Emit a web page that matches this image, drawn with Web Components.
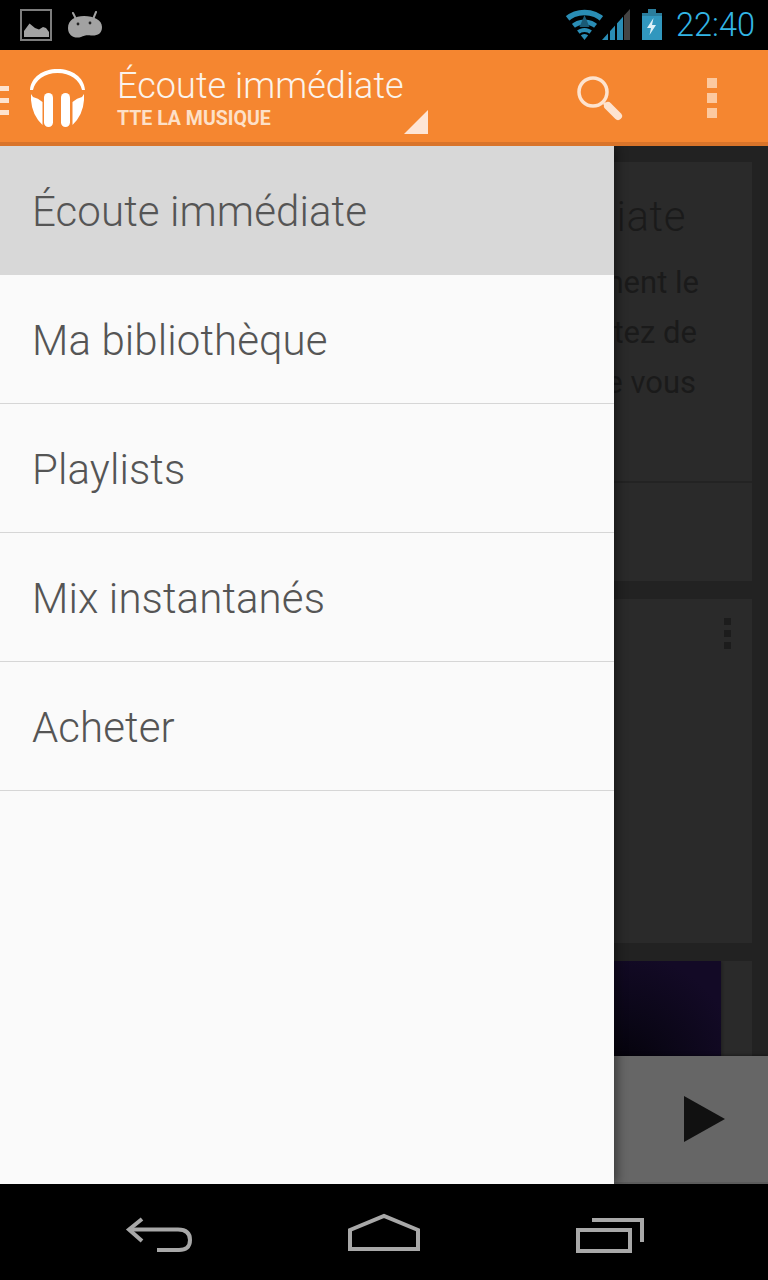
<!DOCTYPE html>
<html lang="fr">
<head>
<meta charset="utf-8">
<title>Écoute immédiate</title>
<style>
  html, body { margin: 0; background: #000; }
  body { font-family: Roboto, "Liberation Sans", sans-serif; }
</style>
</head>
<body>
<app-shell>
  <status-bar slot="status"></status-bar>
  <action-bar slot="action" title="Écoute immédiate" subtitle="TTE LA MUSIQUE"></action-bar>
  <feed-view slot="main"></feed-view>
  <now-playing slot="main"></now-playing>
  <nav-drawer slot="main">
    <drawer-item selected>Écoute immédiate</drawer-item>
    <drawer-item>Ma bibliothèque</drawer-item>
    <drawer-item>Playlists</drawer-item>
    <drawer-item>Mix instantanés</drawer-item>
    <drawer-item>Acheter</drawer-item>
  </nav-drawer>
  <system-nav slot="nav"></system-nav>
</app-shell>

<script>
// small helper so every element below is just markup + styles
function component(name, html, extra) {
    const template = document.createElement('template')
    template.innerHTML = html
    class El extends HTMLElement {
        constructor() {
            super()
            this.attachShadow({ mode: 'open' })
            this.shadowRoot.appendChild(template.content.cloneNode(true))
        }
        connectedCallback() {
            if (extra) extra(this, this.shadowRoot)
        }
    }
    customElements.define(name, El)
}

component('app-shell', `
    <style>
        :host { display: flex; flex-direction: column; width: 768px; height: 1280px; overflow: hidden; }
        #main { position: relative; flex: 1; min-height: 0; overflow: hidden; background: #222; }
    </style>
    <slot name="status"></slot>
    <slot name="action"></slot>
    <div id="main"><slot name="main"></slot></div>
    <slot name="nav"></slot>
`)

component('status-bar', `
    <style>
        :host { display: flex; align-items: center; height: 50px; background: #000; padding: 0 13px 0 20px; box-sizing: border-box; }
        svg { display: block; flex: none; }
        #left { display: flex; gap: 14px; align-items: center; }
        #right { display: flex; align-items: center; margin-left: auto; }
        #time { font: 300 32.500px/50px Roboto, sans-serif; color: #33b5e5; margin-left: 13px; }
    </style>
    <div id="left">
        <svg width="33" height="34" viewBox="0 0 33 34">
            <rect x="1" y="2" width="30" height="30" fill="none" stroke="#7d7d7d" stroke-width="2"/>
            <path d="M4 29V23L9.500 15.500L15 20L19 21.500L23 19L26 20L29 24V29Z" fill="#a2a2a2"/>
        </svg>
        <svg width="35" height="28" viewBox="0 0 35 28">
            <path d="M6 2L8.500 7M29 1L26.500 7" stroke="#a2a2a2" stroke-width="2" stroke-linecap="round"/>
            <path d="M1 17C1 9 8 5 17 5C27 5 35 9 35 16C35 23 30 25 24 24.500C20 24 17 24.500 14 26C8 28 1 25 1 17Z" fill="#a2a2a2"/>
            <circle cx="11" cy="13" r="1.400" fill="#222"/>
            <circle cx="23" cy="12" r="1.400" fill="#222"/>
        </svg>
    </div>
    <div id="right">
        <svg width="98" height="40" viewBox="0 0 98 40">
            <defs>
                <clipPath id="sig"><path d="M37 35L65 4V35Z"/></clipPath>
                <clipPath id="fan"><path d="M19.500 35L-5.800 2.500H44.800Z"/></clipPath>
            </defs>
            <g clip-path="url(#fan)" fill="none" stroke="#2a8db5">
                <circle cx="19.500" cy="35" r="27.500" stroke-width="5.500"/>
                <circle cx="19.500" cy="35" r="18" stroke-width="5"/>
                <circle cx="19.500" cy="35" r="10" stroke-width="4"/>
                <circle cx="19.500" cy="35" r="3" stroke-width="6"/>
            </g>
            <path d="M19.500 10L14.500 22H24.500Z" fill="#1a5a75"/>
            <g clip-path="url(#sig)">
                <rect x="37" y="4" width="6" height="31" fill="#2a8db5"/>
                <rect x="45" y="4" width="5" height="31" fill="#2a8db5"/>
                <rect x="52" y="4" width="6" height="31" fill="#2a8db5"/>
                <rect x="59" y="4" width="6" height="31" fill="#444"/>
            </g>
            <path d="M83 4H91V8H97V35H77V8H83Z" fill="#3197be"/>
            <path d="M83 4H91V8H97V11H77V8H83Z" fill="#2a7d9c"/>
            <path d="M88.500 13L82 23H86L84.500 30L91 20H87Z" fill="#dff1f8"/>
        </svg>
        <div id="time">22:40</div>
    </div>
`)

component('action-bar', `
    <style>
        :host { display: flex; position: relative; align-items: stretch; height: 96px; box-sizing: border-box; background: #f58630; border-bottom: 4px solid #d9742a; }
        svg { display: block; flex: none; }
        #up { display: flex; flex-direction: column; justify-content: center; gap: 7px; width: 9px; margin-top: 9px; flex: none; }
        #up i { display: block; height: 5px; background: #fde3cf; }
        #logo { margin: 16px 0 0 19px; }
        #titles { position: relative; width: 311px; margin-left: 29px; box-sizing: border-box; padding-top: 14px; color: #fff; flex: none; }
        #title { font: 300 36px/44px Roboto, sans-serif; letter-spacing: .06px; color: #fbf3ec; white-space: nowrap; }
        #subtitle { font: 700 19.500px/22px Roboto, sans-serif; color: #fde0c8; white-space: nowrap; margin-top: 0; }
        #titles::after { content: ''; position: absolute; right: 0; bottom: 8px; width: 24px; height: 24px; background: #fee5d5; clip-path: polygon(100% 0, 100% 100%, 0 100%); }
        #search { margin: 24px 0 0 147px; }
        #more { display: flex; flex-direction: column; gap: 5px; margin: 28px 0 0 84px; }
        #more i { display: block; width: 10px; height: 10px; background: #fcc9a0; }
    </style>
    <div id="up"><i></i><i></i><i></i></div>
    <svg id="logo" width="60" height="66" viewBox="0 0 60 66">
        <path d="M2 24C3 11 15 3 29.500 3C44 3 56 11 57 24H54C52 14 42 7 29.500 7C17 7 7 14 5 24Z" fill="#fff"/>
        <path d="M3 28L5 31Q10 32 14.500 36V59Q4 49 3 34Z" fill="#fff"/>
        <path d="M56 28L54 31Q49 32 44.500 36V59Q55 49 56 34Z" fill="#fff"/>
        <rect x="16" y="27" width="9" height="34" rx="4.500" fill="#fff"/>
        <rect x="33" y="27" width="9" height="34" rx="4.500" fill="#fff"/>
    </svg>
    <div id="titles">
        <div id="title"></div>
        <div id="subtitle"></div>
    </div>
    <svg id="search" width="48" height="48" viewBox="0 0 48 48">
        <circle cx="18" cy="18" r="14" fill="none" stroke="#fde3cf" stroke-width="3.500"/>
        <path d="M29 29L32 32" stroke="#fde3cf" stroke-width="3"/>
        <path d="M33 32L43 42" stroke="#fde3cf" stroke-width="8" stroke-linecap="round"/>
    </svg>
    <div id="more"><i></i><i></i><i></i></div>
`, (el, root) => {
    root.querySelector('#title').textContent = el.getAttribute('title')
    root.querySelector('#subtitle').textContent = el.getAttribute('subtitle')
    el.removeAttribute('title')
})

component('feed-view', `
    <style>
        :host { display: flex; flex-direction: column; gap: 18px; padding: 16px 16px 0; color: #1a1a1a; font-family: Roboto, sans-serif; background: #222; height: 100%; box-sizing: border-box; }
        .card { background: #2a2a2a; flex: none; text-align: right; overflow: hidden; }
        #one { height: 419px; }
        #copy { height: 321px; box-sizing: border-box; border-bottom: 2px solid #232323; padding: 30px 53px 0 0; }
        h2 { margin: 0 13px 0 0; font: 300 42px/50px Roboto, sans-serif; letter-spacing: .6px; white-space: nowrap; }
        p { margin: 16px 0 0; font: 400 31px/50px Roboto, sans-serif; white-space: nowrap; }
        p span { display: block; }
        #two { height: 344px; position: relative; }
        #dots { position: absolute; right: 21px; top: 19px; display: flex; flex-direction: column; gap: 5px; }
        #dots i { display: block; width: 7px; height: 7px; background: #1c1c1c; }
        #three { height: 120px; }
        #art { width: 705px; height: 100%; background: radial-gradient(circle at 598px 100%, #020106 0, #0a0616 60px, #130a26 130px); box-shadow: 1px 0 3px rgba(0,0,0,.3); }
    </style>
    <div class="card" id="one">
        <div id="copy">
            <h2>Écoute immédiate</h2>
            <p>
                <span>ment le</span>
                <span style="margin-right: 2px">tez de</span>
                <span style="margin-right: 3px">que vous</span>
            </p>
        </div>
    </div>
    <div class="card" id="two"><div id="dots"><i></i><i></i><i></i></div></div>
    <div class="card" id="three"><div id="art"></div></div>
`)

component('now-playing', `
    <style>
        :host { display: flex; align-items: center; justify-content: flex-end; position: absolute; left: 0; right: 0; bottom: 0; height: 128px; box-sizing: border-box; background: #666; border-bottom: 2px solid #5c5c5c; padding-right: 43px; box-shadow: 0 -1px 3px rgba(0,0,0,.35); }
        svg { display: block; }
    </style>
    <svg width="41" height="46" viewBox="0 0 41 46"><path d="M0 0L41 23L0 46Z" fill="#111"/></svg>
`)

component('nav-drawer', `
    <style>
        :host { display: flex; flex-direction: column; position: absolute; left: 0; top: 0; bottom: 0; width: 614px; background: #fafafa; box-shadow: 3px 0 10px rgba(0,0,0,.45); }
    </style>
    <slot></slot>
`)

component('drawer-item', `
    <style>
        :host { display: flex; align-items: center; height: 129px; box-sizing: border-box; padding: 3px 0 0 32px; border-bottom: 1px solid #d6d6d6; font: 300 42px/1 Roboto, sans-serif; letter-spacing: .1px; color: #555; white-space: nowrap; }
        :host([selected]) { background: #d8d8d8; border-bottom-color: #d8d8d8; }
    </style>
    <slot></slot>
`)

component('system-nav', `
    <style>
        :host { display: block; height: 96px; background: #000; }
        svg { display: block; }
    </style>
    <svg width="768" height="96" viewBox="0 1184 768 96">
        <g fill="none" stroke="#a8a8a8" stroke-width="4">
            <path d="M142 1219L129 1229.500L142 1241"/>
            <path d="M129 1229.500H178Q190 1229.500 190 1240T178 1250H157"/>
            <path d="M350 1249V1230L384 1216L418 1230V1249Z"/>
            <rect x="578" y="1230" width="52" height="21"/>
            <path d="M592 1220H642V1242"/>
        </g>
    </svg>
`)
</script>
</body>
</html>
